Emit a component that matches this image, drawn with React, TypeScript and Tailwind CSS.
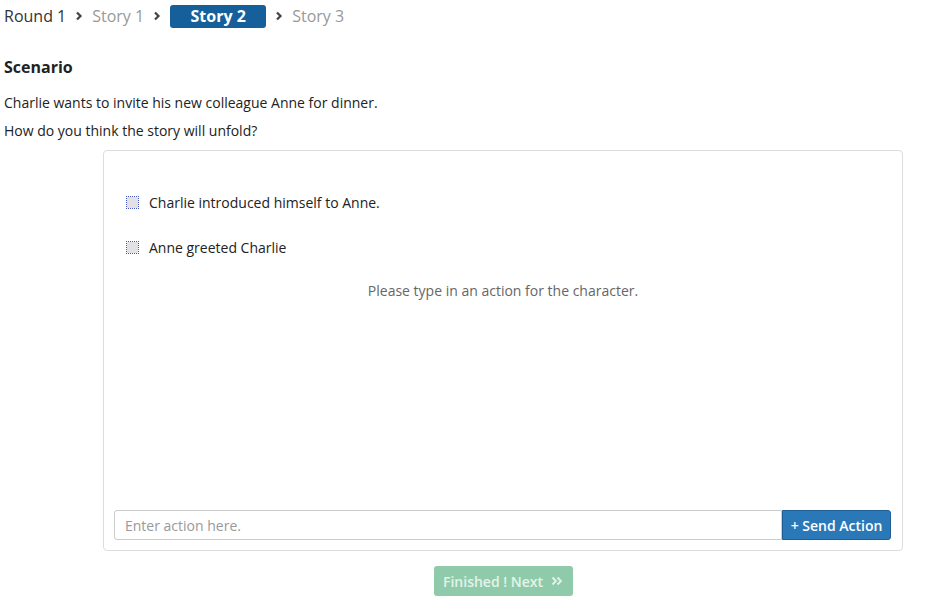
import React, { useState } from "react";

const font = { fontFamily: '"Open Sans", "Noto Sans", sans-serif' };

const Chevron = () => (
  <svg width="8" height="10" viewBox="0 0 8 10" className="mx-[9px]">
    <path d="M2 1.5 L5.5 5 L2 8.5" stroke="#444" strokeWidth="2.2" fill="none" />
  </svg>
);

// dotted square marker in front of each action
const ActionIcon = () => (
  <svg width="13" height="13" viewBox="0 0 13 13" className="mr-[10px]">
    <rect x="1" y="1" width="11" height="11" fill="#e2e2e6" />
    {[0, 2, 4, 6, 8, 10, 12].map((p) => (
      <g key={p} fill="#4455c4">
        <rect x={p} y={0} width="1" height="1" />
        <rect x={p} y={12} width="1" height="1" />
        <rect x={0} y={p} width="1" height="1" />
        <rect x={12} y={p} width="1" height="1" />
      </g>
    ))}
  </svg>
);

const App = () => {
  const [action, setAction] = useState("");

  return (
    <div className="w-[933px] h-[612px] bg-white text-[#222] text-[14px]" style={font}>
      {/* breadcrumb */}
      <div className="flex items-center h-[32px] pl-[4px] text-[16px]">
        <span className="text-[#333]">Round 1</span>
        <Chevron />
        <span className="text-[#999]">Story 1</span>
        <Chevron />
        <span className="w-[96px] h-[23px] rounded-[3px] bg-[#155f9a] text-white font-bold flex items-center justify-center">
          Story 2
        </span>
        <Chevron />
        <span className="text-[#999]">Story 3</span>
      </div>

      <div className="px-[4px]">
        <h3 className="text-[16px] font-bold mt-[23px] leading-[24px]">Scenario</h3>
        <p className="mt-[14px] leading-[20px]">Charlie wants to invite his new colleague Anne for dinner.</p>
        <p className="mt-[8px] leading-[20px]">How do you think the story will unfold?</p>
      </div>

      <div className="ml-[103px] w-[800px]">
        <div className="h-[401px] mt-[9px] border border-[#ddd] rounded-[4px] flex flex-col">
          <div className="flex-1 pt-[41px] px-[22px]">
            <div className="flex items-center h-[20px] mb-[25px]">
              <ActionIcon />
              <span>Charlie introduced himself to Anne.</span>
            </div>
            <div className="flex items-center h-[20px] mb-[23px]">
              <ActionIcon />
              <span>Anne greeted Charlie</span>
            </div>
            <p className="text-center text-[#666]">Please type in an action for the character.</p>
          </div>
          <div className="flex pl-[10px] pr-[11px] pb-[10px]">
            <input
              value={action}
              onChange={(e) => setAction(e.target.value)}
              placeholder="Enter action here."
              className="flex-1 h-[30px] border border-[#ccc] rounded-l-[3px] px-[10px] text-[14px] placeholder:text-[#999] outline-none"
            />
            <button className="w-[109px] h-[30px] bg-[#2a78b8] border border-[#1f5f94] rounded-r-[3px] text-white text-[14px] font-semibold">
              + Send Action
            </button>
          </div>
        </div>

        <div className="flex justify-center mt-[15px]">
          <button
            disabled
            className="w-[139px] h-[30px] rounded-[3px] bg-[#8fcbaa] text-[#e4f3ea] text-[14px] font-semibold flex items-center justify-center gap-[8px]"
          >
            Finished ! Next
            <svg width="12" height="10" viewBox="0 0 12 10">
              <path d="M1.5 1.5 L5 5 L1.5 8.5 M6.5 1.5 L10 5 L6.5 8.5" stroke="#e4f3ea" strokeWidth="1.8" fill="none" />
            </svg>
          </button>
        </div>
      </div>
    </div>
  );
};

export default App;
